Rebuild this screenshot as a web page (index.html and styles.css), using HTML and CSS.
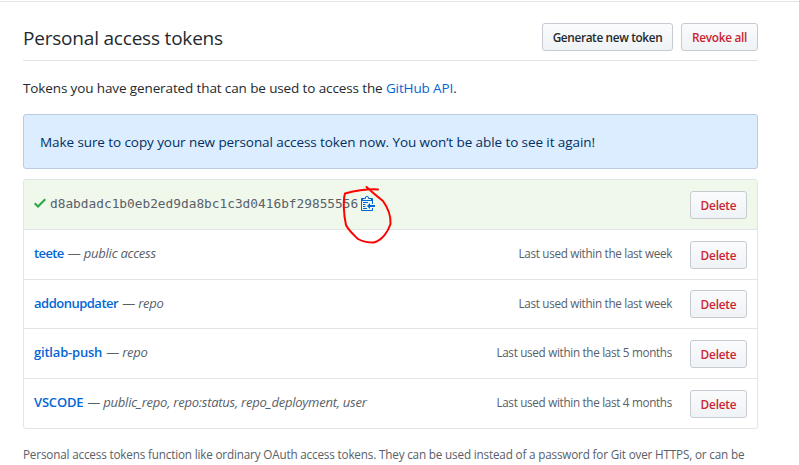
FILE: index.html
```html
<!DOCTYPE html>
<html lang="en">
<head>
<meta charset="utf-8">
<title>Personal access tokens</title>
<link rel="stylesheet" href="styles.css">
</head>
<body>
<main class="page">
  <header class="subhead">
    <h1 class="title">Personal access tokens</h1>
    <div class="actions">
      <button class="btn btn-generate">Generate new token</button>
      <button class="btn btn-danger btn-revoke">Revoke all</button>
    </div>
  </header>
  <p class="intro">Tokens you have generated that can be used to access the <a href="#">GitHub API</a>.</p>
  <div class="flash"><span class="flash-text">Make sure to copy your new personal access token now. You won’t be able to see it again!</span></div>
  <ul class="tokens">
    <li class="row row-new">
      <div class="token">
        <svg class="check" width="12" height="16" viewBox="0 0 12 16"><path d="M12 5l-8 8-4-4 1.5-1.5L4 10l6.5-6.5L12 5z"/></svg>
        <code class="hash">d8abdadc1b0eb2ed9da8bc1c3d0416bf29855556</code>
        <span class="copy">
          <svg class="clippy" width="14" height="16" viewBox="0 0 14 16"><path d="M2 13h4v1H2v-1zm5-6H2v1h5V7zm2 3V8l-3 3 3 3v-2h5v-2H9zM4.5 9H2v1h2.5V9zM2 12h2.5v-1H2v1zm9 1h1v2c-.02.28-.11.52-.3.7-.19.18-.42.28-.7.3H1c-.55 0-1-.45-1-1V4c0-.55.45-1 1-1h3c0-1.11.89-2 2-2 1.11 0 2 .89 2 2h3c.55 0 1 .45 1 1v5h-1V6H1v9h10v-2zM2 5h8c0-.55-.45-1-1-1H8c-.55 0-1-.45-1-1s-.45-1-1-1-1 .45-1 1-.45 1-1 1H3c-.55 0-1 .45-1 1z"/></svg>
          <svg class="scribble" width="80" height="80" viewBox="0 0 80 80"><path d="M48 14.5C40 14 27 15.500 15 18.500C13 25 13.500 39 16 50C19 56 24 60 28 64C33 67 37 67.500 44 67.500C52 65 58 57 60.500 49C61 42 58 33 53 26C48 22 43 18 36.500 12"/></svg>
        </span>
      </div>
      <button class="btn btn-danger btn-delete">Delete</button>
    </li>
    <li class="row">
      <div class="token"><a class="name n1" href="#">teete</a><span class="dash">—</span><em class="scope s1">public access</em></div>
      <span class="used">Last used within the last week</span>
      <button class="btn btn-danger btn-delete">Delete</button>
    </li>
    <li class="row row-short">
      <div class="token"><a class="name n2" href="#">addonupdater</a><span class="dash">—</span><em class="scope">repo</em></div>
      <span class="used">Last used within the last week</span>
      <button class="btn btn-danger btn-delete">Delete</button>
    </li>
    <li class="row">
      <div class="token"><a class="name n3" href="#">gitlab-push</a><span class="dash">—</span><em class="scope">repo</em></div>
      <span class="used">Last used within the last 5 months</span>
      <button class="btn btn-danger btn-delete">Delete</button>
    </li>
    <li class="row">
      <div class="token"><a class="name n4" href="#">VSCODE</a><span class="dash">—</span><em class="scope s4">public_repo, repo:status, repo_deployment, user</em></div>
      <span class="used">Last used within the last 4 months</span>
      <button class="btn btn-danger btn-delete">Delete</button>
    </li>
  </ul>
  <p class="note">Personal access tokens function like ordinary OAuth access tokens. They can be used instead of a password for Git over HTTPS, or can be</p>
</main>
</body>
</html>
```
FILE: styles.css
```css
* { box-sizing: border-box; }
html, body { margin: 0; height: 465px; overflow: hidden; background: #fff; }
body {
  padding-top: 1px;
  font: 14px/21px "Open Sans", "Noto Sans", sans-serif;
  color: #24292e;
}
a { color: #0366d6; text-decoration: none; }
.page { height: 464px; border-top: 1px solid #e1e4e8; padding: 0 41px 0 23px; }
.subhead {
  display: flex; justify-content: space-between; align-items: flex-start;
  height: 59px; padding-top: 21px; border-bottom: 1px solid #e1e4e8;
}
.title { margin: 0; font-size: 19px; line-height: 30px; font-weight: 400; white-space: nowrap; letter-spacing: -.2px; }
.actions { display: flex; gap: 8px; }
.btn {
  height: 28px; padding: 0; border: 1px solid #c6cbd1; border-radius: 3px;
  background: linear-gradient(#fafbfc, #eff3f6);
  font: 600 11.800px/26px "Open Sans", "Noto Sans", sans-serif;
  color: #24292e; white-space: nowrap; flex: none;
}
.btn-danger { color: #cb2431; }
.btn-generate { width: 131px; letter-spacing: -.35px; }
.btn-revoke { width: 77px; letter-spacing: -.3px; }
.btn-delete { width: 57px; letter-spacing: -.2px; }
.intro { margin: 17px 0 15px; white-space: nowrap; font-size: 13.500px; letter-spacing: -.12px; }
.flash {
  height: 55px; padding: 17px 16px 15px; border: 1px solid #b9cbdc; border-radius: 3px;
  background: #dbedff; color: #032f62; white-space: nowrap; font-size: 13.500px; letter-spacing: -.085px;
}
.tokens {
  list-style: none; margin: 10px 0 0; padding: 0;
  border: 1px solid #e1e4e8; border-radius: 3px; overflow: hidden;
}
.row { display: flex; height: 50px; padding: 11px 10px 0; border-top: 1px solid #e1e4e8; }
.row:first-child { border-top: 0; height: 49px; }
.row-short { height: 49px; padding-top: 10px; }
.row-new { background: #f0f8ec; }
.token { flex: 1; display: flex; align-items: center; height: 25px; white-space: nowrap; color: #586069; }
.row-short .token { height: 27px; }
.check { fill: #28a745; margin: -1px 4px 0 0; }
.hash { width: 308px; font: 12.800px/20px "DejaVu Sans Mono", monospace; }
.copy { position: relative; display: flex; margin: -1px 0 0 3px; }
.clippy { fill: #0366d6; }
.scribble { position: absolute; left: -31px; top: -20px; fill: none; stroke: #f00; stroke-width: 2; stroke-linecap: round; stroke-linejoin: round; }
.name { font-size: 13px; font-weight: 600; letter-spacing: -.2px; }
.n1 { letter-spacing: -.6px; }
.n2 { letter-spacing: -.5px; }
.dash { margin: 0 3px 0 4px; font-size: 13px; }
.scope { font-size: 13px; letter-spacing: -.24px; }
.used { margin-right: 18px; line-height: 24px; font-size: 11.700px; color: #586069; white-space: nowrap; letter-spacing: -.31px; }
.row-short .used { line-height: 26px; }
.note { margin: 15px 0 0; font-size: 11.700px; line-height: 20px; color: #586069; white-space: nowrap; letter-spacing: -.165px; }
```
